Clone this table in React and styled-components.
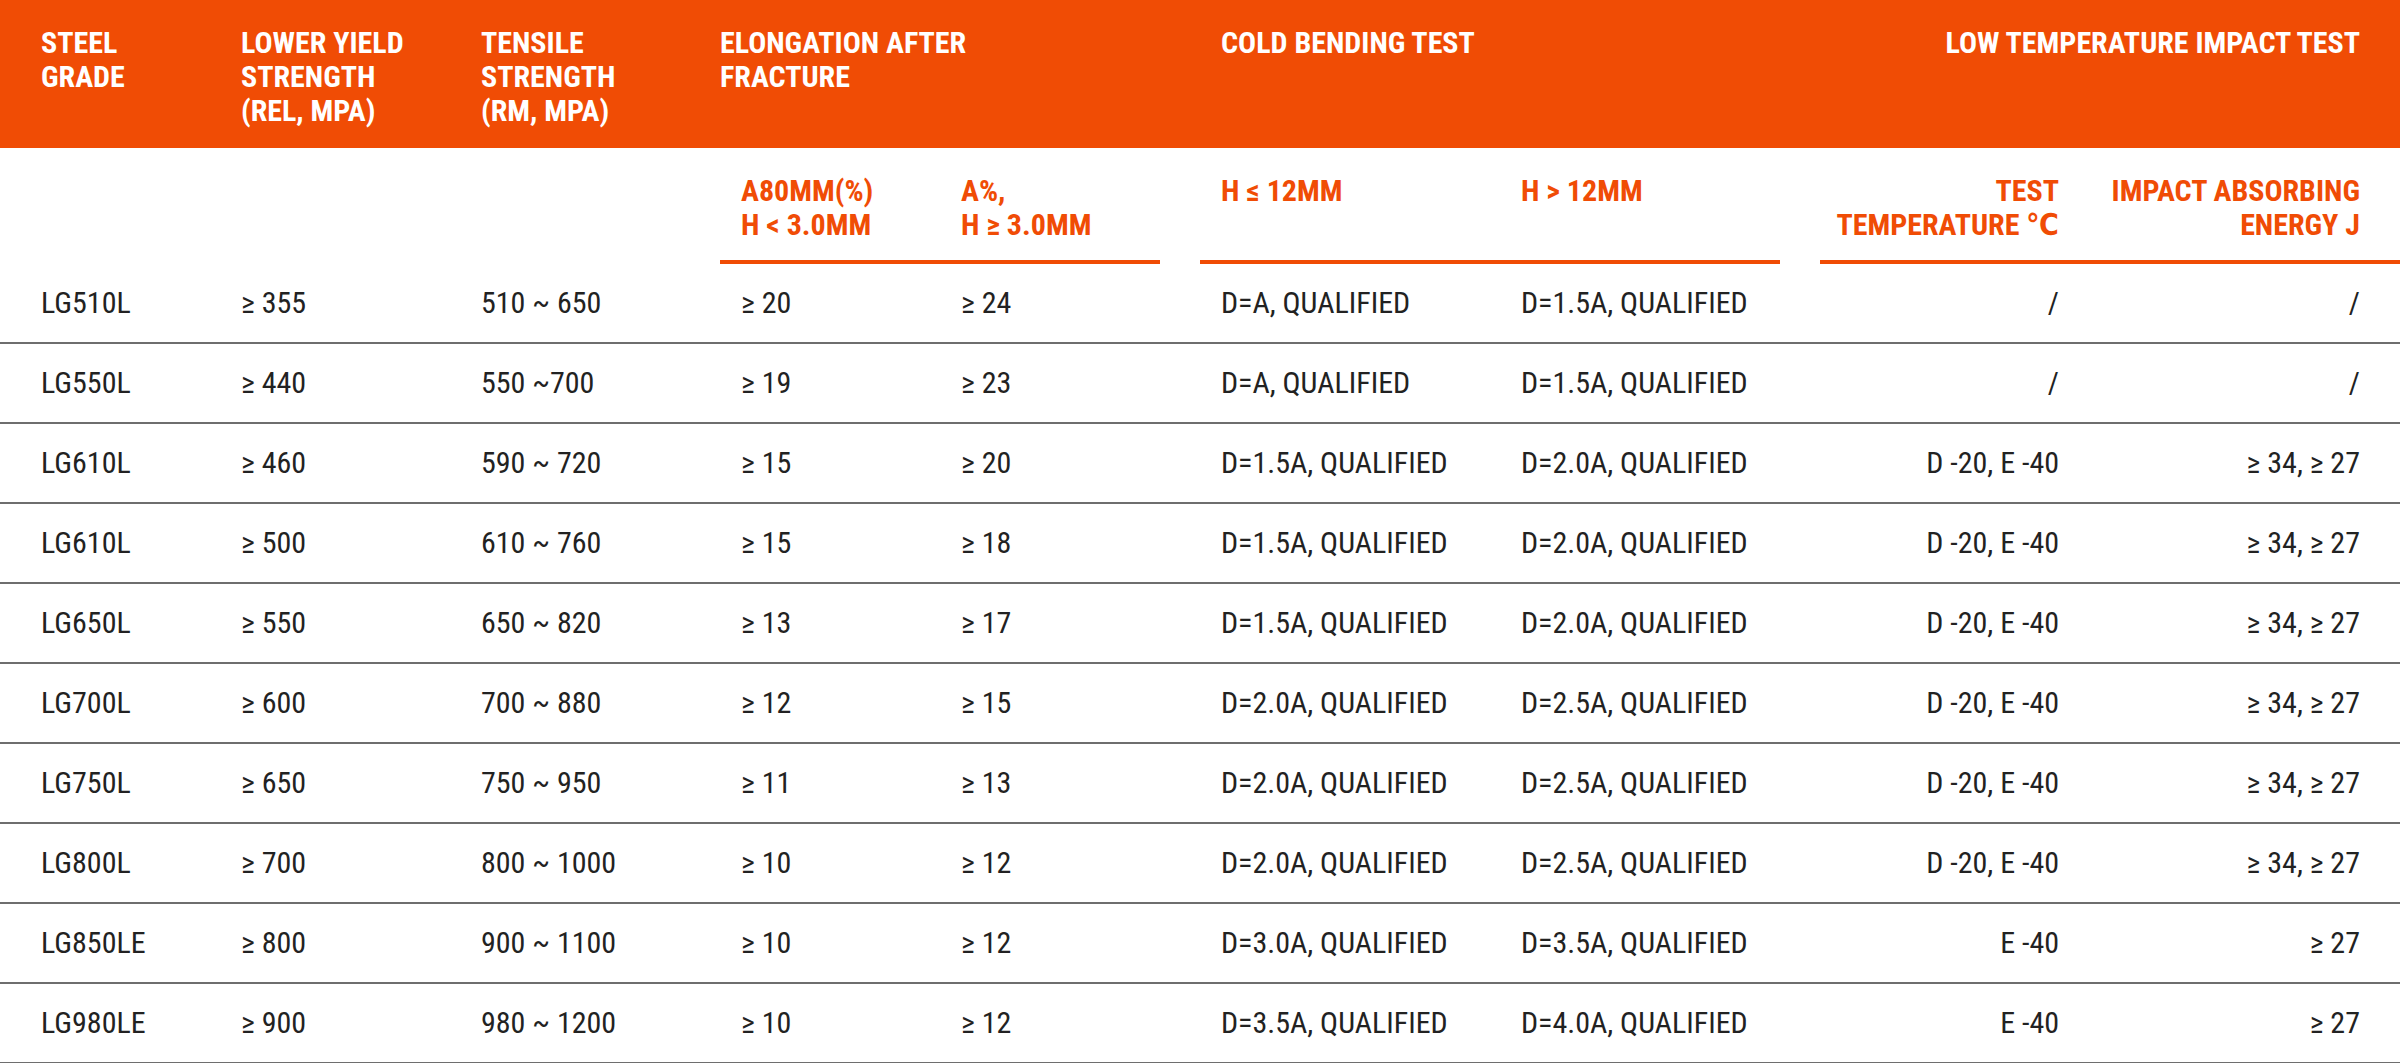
import React from 'react';
import styled, { createGlobalStyle } from 'styled-components';

const ORANGE = '#F04C05';
const COLS = '200px 240px 260px 220px 260px 300px 300px 300px 300px';

const GlobalStyle = createGlobalStyle`
  html, body {
    margin: 0;
    padding: 0;
    background: #ffffff;
  }
  body {
    font-family: "Roboto Condensed", "Liberation Sans Narrow", "DejaVu Sans Condensed", Roboto, sans-serif;
    font-stretch: condensed;
  }
`;

const Table = styled.div`
  width: 2400px;
`;

const HeadBand = styled.div`
  display: grid;
  grid-template-columns: ${COLS};
  padding-left: 20px;
  height: 148px;
  box-sizing: border-box;
  background: ${ORANGE};
  align-items: start;
`;

const HeadCell = styled.div`
  grid-column: ${(p) => p.$span || 'auto'};
  padding: 26px ${(p) => (p.$right ? '40px' : '0')} 0 ${(p) => (p.$flush ? '0' : '21px')};
  text-align: ${(p) => (p.$right ? 'right' : 'left')};
  color: #ffffff;
  font-weight: 700;
  font-size: 30px;
  line-height: 34px;
  text-transform: uppercase;
  white-space: nowrap;
`;

const SubRow = styled.div`
  display: grid;
  grid-template-columns: ${COLS};
  padding-left: 20px;
`;

const Group = styled.div`
  grid-column: ${(p) => p.$span};
  display: grid;
  grid-template-columns: ${(p) => p.$cols};
  margin: 0 ${(p) => p.$mr || 0} 0 ${(p) => p.$ml || 0};
  border-bottom: 4px solid ${ORANGE};
`;

const SubCell = styled.div`
  padding: 26px ${(p) => p.$pr || '0'} 18px ${(p) => (p.$right ? '0' : '21px')};
  text-align: ${(p) => (p.$right ? 'right' : 'left')};
  color: ${ORANGE};
  font-weight: 700;
  font-size: 30px;
  line-height: 34px;
  text-transform: uppercase;
  white-space: nowrap;
`;

const Row = styled.div`
  display: grid;
  grid-template-columns: ${COLS};
  padding-left: 20px;
  height: 80px;
  box-sizing: border-box;
  border-bottom: 2px solid #6e6e6e;
  align-items: center;
`;

const Cell = styled.div`
  padding: 0 ${(p) => p.$pr || '0'} 0 ${(p) => (p.$right ? '0' : '21px')};
  text-align: ${(p) => (p.$right ? 'right' : 'left')};
  color: #222222;
  font-size: 30px;
  line-height: 34px;
  white-space: nowrap;
`;

const rows = [
  ['LG510L', '≥ 355', '510 ~ 650', '≥ 20', '≥ 24', 'D=A, QUALIFIED', 'D=1.5A, QUALIFIED', '/', '/'],
  ['LG550L', '≥ 440', '550 ~700', '≥ 19', '≥ 23', 'D=A, QUALIFIED', 'D=1.5A, QUALIFIED', '/', '/'],
  ['LG610L', '≥ 460', '590 ~ 720', '≥ 15', '≥ 20', 'D=1.5A, QUALIFIED', 'D=2.0A, QUALIFIED', 'D -20, E -40', '≥ 34, ≥ 27'],
  ['LG610L', '≥ 500', '610 ~ 760', '≥ 15', '≥ 18', 'D=1.5A, QUALIFIED', 'D=2.0A, QUALIFIED', 'D -20, E -40', '≥ 34, ≥ 27'],
  ['LG650L', '≥ 550', '650 ~ 820', '≥ 13', '≥ 17', 'D=1.5A, QUALIFIED', 'D=2.0A, QUALIFIED', 'D -20, E -40', '≥ 34, ≥ 27'],
  ['LG700L', '≥ 600', '700 ~ 880', '≥ 12', '≥ 15', 'D=2.0A, QUALIFIED', 'D=2.5A, QUALIFIED', 'D -20, E -40', '≥ 34, ≥ 27'],
  ['LG750L', '≥ 650', '750 ~ 950', '≥ 11', '≥ 13', 'D=2.0A, QUALIFIED', 'D=2.5A, QUALIFIED', 'D -20, E -40', '≥ 34, ≥ 27'],
  ['LG800L', '≥ 700', '800 ~ 1000', '≥ 10', '≥ 12', 'D=2.0A, QUALIFIED', 'D=2.5A, QUALIFIED', 'D -20, E -40', '≥ 34, ≥ 27'],
  ['LG850LE', '≥ 800', '900 ~ 1100', '≥ 10', '≥ 12', 'D=3.0A, QUALIFIED', 'D=3.5A, QUALIFIED', 'E -40', '≥ 27'],
  ['LG980LE', '≥ 900', '980 ~ 1200', '≥ 10', '≥ 12', 'D=3.5A, QUALIFIED', 'D=4.0A, QUALIFIED', 'E -40', '≥ 27'],
];

export default function App() {
  return (
    <>
      <GlobalStyle />
      <Table>
        <HeadBand>
          <HeadCell>Steel<br />grade</HeadCell>
          <HeadCell>Lower yield<br />strength<br />(REL, MPA)</HeadCell>
          <HeadCell>Tensile<br />strength<br />(RM, MPA)</HeadCell>
          <HeadCell $span="span 2" $flush>Elongation after<br />fracture</HeadCell>
          <HeadCell $span="span 2">Cold bending test</HeadCell>
          <HeadCell $span="span 2" $right>Low temperature impact test</HeadCell>
        </HeadBand>

        <SubRow>
          <Group $span="4 / span 2" $cols="220px 1fr" $mr="40px">
            <SubCell>A80MM(%)<br />H &lt; 3.0MM</SubCell>
            <SubCell>A%,<br />H ≥ 3.0MM</SubCell>
          </Group>
          <Group $span="6 / span 2" $cols="300px 1fr" $mr="20px">
            <SubCell>H ≤ 12MM</SubCell>
            <SubCell>H &gt; 12MM</SubCell>
          </Group>
          <Group $span="8 / span 2" $cols="280px 1fr" $ml="20px">
            <SubCell $right $pr="41px">Test<br />temperature ℃</SubCell>
            <SubCell $right $pr="40px">Impact absorbing<br />energy J</SubCell>
          </Group>
        </SubRow>

        {rows.map((r, i) => (
          <Row key={i}>
            {r.slice(0, 7).map((v, j) => (
              <Cell key={j}>{v}</Cell>
            ))}
            <Cell $right $pr="41px">{r[7]}</Cell>
            <Cell $right $pr="40px">{r[8]}</Cell>
          </Row>
        ))}
      </Table>
    </>
  );
}
